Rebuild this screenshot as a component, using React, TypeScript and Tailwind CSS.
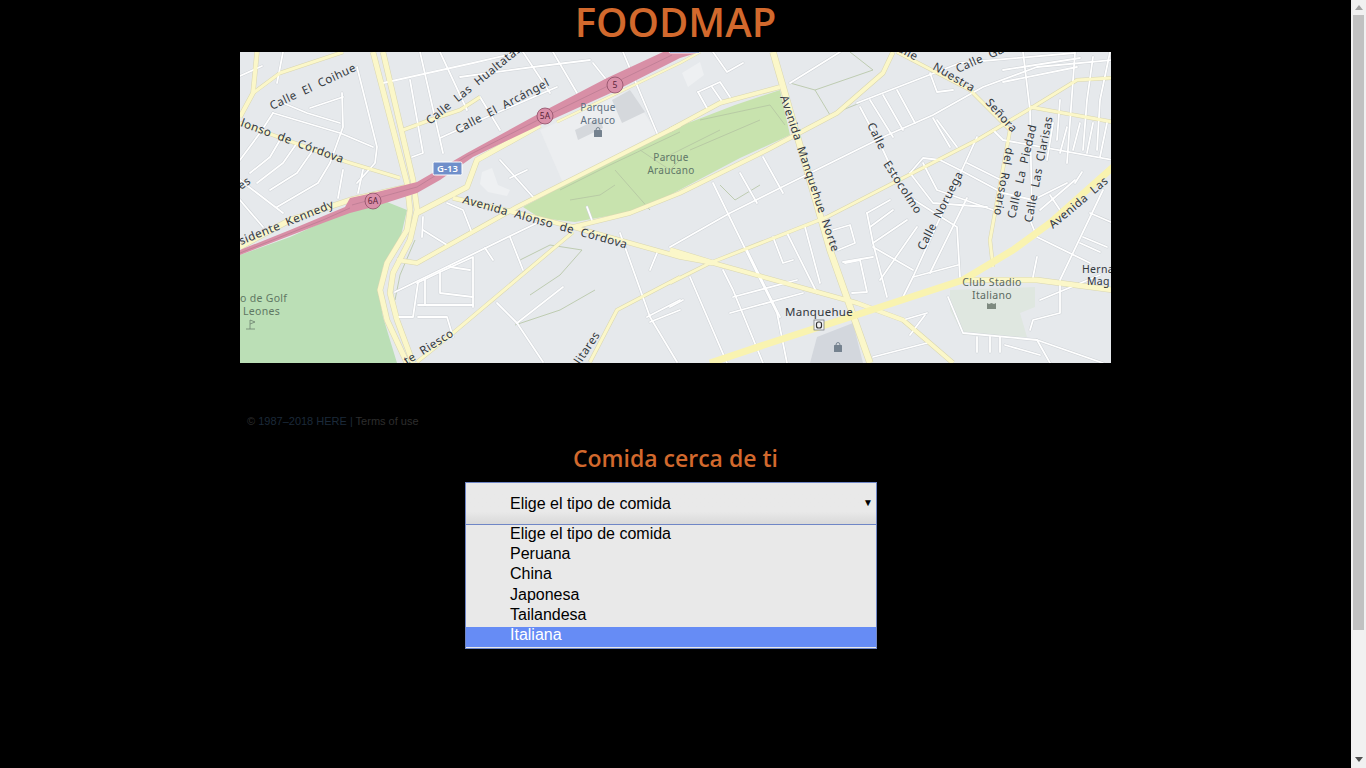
import React from 'react';

// park, mall and other area fills, in page coordinates (viewBox matches the map's place on the page)
const areas: [string, string][] = [
  ['#bbdfb6', '240,255 290,237 350,210 387,202 407,210 400,240 383,267 378,290 383,317 397,363 240,363'],
  ['#c8e3ae', '523,207 670,130 735,105 780,90 790,135 740,158 670,195 630,212 575,222 540,218'],
  ['#dfe7e0', '950,290 1035,287 1035,307 1020,313 1027,337 963,335 950,310'],
  ['#d3d7dd', '817,337 853,323 863,363 810,363'],
  ['#eceef0', '540,130 630,90 657,133 563,183'],
  ['#d5d8dc', '575,130 600,118 603,128 578,140'],
  ['#d5d8dc', '612,100 630,90 645,112 622,123'],
  ['#eef0f2', '482,172 492,168 498,185 510,190 507,196 488,192 480,184'],
  ['#eef0f2', '682,73 700,62 704,75 688,87'],
];

const minor: string[] = [
  '240,76 262,66', '273,113 340,133 373,147', '283,103 307,113 340,123', '310,108 343,97',
  '342,93 343,127 330,163 318,183 277,207', '357,67 377,147 375,163 357,183', '283,52 277,83',
  '273,113 260,133 240,160', '313,150 297,173 270,190', '297,143 283,163 257,183', '280,140 270,157 250,173',
  '240,180 283,213', '240,200 263,227', '343,170 338,198', '363,170 358,193',
  '383,83 473,63 520,52', '410,80 423,153 412,157', '420,52 443,153', '440,52 467,110',
  '440,138 473,123 557,87', '480,97 500,130', '523,52 550,93', '553,52 577,93', '460,77 533,67 590,60',
  '593,63 617,93', '623,52 657,133', '500,160 533,197', '510,178 527,170', '447,203 463,210 472,233',
  '423,230 447,245', '423,217 422,237', '395,292 537,223', '510,237 523,270', '485,248 493,260',
  '397,317 413,317 418,283', '418,305 473,305', '417,283 440,272 473,257 473,307', '425,280 425,305',
  '440,272 440,293 473,297', '450,267 470,270', '418,317 447,317 453,337', '620,233 650,317 677,362',
  '647,317 680,300', '650,322 680,310', '517,323 563,287', '517,323 543,362', '497,303 517,323',
  '650,270 657,253', '587,207 593,223', '630,213 647,207',
  '713,52 727,72 743,63', '698,92 720,82 730,97', '698,92 708,110', '712,87 723,103',
  '790,83 840,52', '857,103 960,63 1075,53', '860,107 883,150 903,193 957,227 960,277',
  '870,100 893,137', '883,95 903,130', '897,90 915,123', '670,247 730,213 790,183 883,137 933,115 983,87 1037,67 1113,60',
  '713,183 757,273 777,313 787,363', '740,173 757,203', '763,157 783,193', '937,120 957,147', '933,118 950,147',
  '940,160 960,170 1003,193 1033,200 1067,183', '967,163 1007,183', '993,130 1003,140 1113,160',
  '910,173 933,203 987,207', '923,163 937,190 993,210', '910,173 923,158 940,160',
  '977,137 913,277 903,297', '967,198 930,273', '913,277 958,265', '867,213 873,243 887,297', '867,213 890,200',
  '870,227 893,210', '873,243 907,220', '880,280 917,227', '873,247 913,270', '843,262 873,257',
  '833,230 850,225 855,243 838,250', '845,263 860,260 867,292 852,293', '773,237 783,263 793,260',
  '787,233 817,293', '805,227 820,283', '690,277 727,363', '723,270 733,290 763,363',
  '733,297 797,280', '730,313 803,293', '747,250 780,317', '873,357 927,343', '910,335 925,315',
  '670,307 683,300', '903,320 927,313',
  '948,297 963,333 1037,340 1103,363', '977,337 977,352', '990,337 990,352', '1000,337 1000,352',
  '1030,330 1033,320 1060,313 1060,283', '1037,257 1033,277', '1030,220 1037,237 1090,263',
  '1060,280 1103,190', '1090,213 1113,223', '1083,237 1107,247', '1080,243 1100,252',
  '1075,53 1067,163', '1023,52 1030,110 1032,217', '1093,57 1087,100 1083,150', '1110,52 1100,100 1097,150',
  '1060,100 1057,140', '1003,70 1080,58', '1003,82 1077,67', '930,73 937,92 953,90', '1040,210 1075,180',
  '1050,195 1060,210', '1075,183 1082,172', '1040,300 1100,275', '1005,345 1040,355', '1037,340 1050,363',
  '1053,123 1047,160', '1067,127 1060,153', '1080,123 1073,150', '1093,123 1087,153', '1107,123 1100,157',
];

const major: [string, number][] = [
  ['373,52 407,183 410,210 407,230 387,263 380,290 387,320 407,363', 5],
  ['383,52 413,180 417,210 410,240 393,273 390,293 397,320 413,363', 5],
  ['257,52 253,93 240,117', 4],
  ['253,93 280,73 343,52', 3],
  ['240,123 347,162 400,178', 3],
  ['453,198 517,213 573,227 680,257 713,263 857,303 903,320 953,363', 4],
  ['417,213 467,187 477,160 540,125', 5],
  ['557,122 680,63 700,52', 2],
  ['680,125 517,207 417,263 397,260', 4],
  ['670,130 720,103 780,87', 4],
  ['573,227 630,213 680,193 767,150 837,113 883,73 893,52', 4],
  ['573,232 453,333 417,362', 3],
  ['680,277 617,310 590,362', 3],
  ['670,283 710,263 827,217 977,140 1033,107 1077,80 1113,78', 3],
  ['773,52 830,250 870,363', 6],
  ['963,280 1037,280 1113,290', 5],
  ['897,52 970,90 1010,130 990,240 993,267', 3],
  ['1030,107 1113,122', 3],
  ['403,130 430,120 460,110 480,97', 3],
  ['670,250 713,263', 5],
  ['240,247 290,220 350,200 407,187', 5],
];

const veg: string[] = [
  '560,190 610,165 680,132', '615,170 650,210', '570,200 600,195 615,185', '640,150 670,170 680,160',
  '700,120 770,105 785,125', '690,150 760,120', '660,160 720,130', '790,83 815,90 873,70 850,52',
  '815,90 830,115 860,103', '720,185 735,200 760,185', '415,240 400,275 395,300', '515,325 560,310 595,290',
  '520,260 550,245 582,250 560,275 530,295', '930,70 900,52',
];

const labels: [string, number, number, number][] = [
  ['Calle  El  Coihue', 272, 110, -25],
  ['Calle  Las  Hualtatas', 430, 125, -39],
  ['Calle  El  Arcángel', 458, 134, -28],
  ['lonso  de  Córdova', 240, 126, 20],
  ['es', 241, 190, -35],
  ['sidente  Kennedy', 241, 245, -22],
  ['Avenida  Alonso  de  Córdova', 462, 203, 15.5],
  ['te  Riesco', 407, 365, -32],
  ['litares', 580, 365, -56],
  ['Avenida  Manquehue  Norte', 780, 97, 71.5],
  ['Calle', 867, 125, 64],
  ['Estocolmo', 883, 164, 57],
  ['Calle  Noruega', 924, 251, -63],
  ['alle', 897, 51, 28],
  ['Nuestra', 932, 69, 30],
  ['Señora', 985, 103, 48],
  ['del  Rosario', 1006, 147, 100],
  ['Calle  La  Piedad', 1015, 219, -77],
  ['Calle  Las  Clarisas', 1032, 223, -79],
  ['Avenida  Las', 1053, 229, -40],
  ['Calle  Ga', 958, 73, -24],
];

const places: [string, number, number, string, number][] = [
  ['Parque', 598, 111, '#5d6f80', 10],
  ['Arauco', 598, 124, '#5d6f80', 10],
  ['Parque', 671, 161, '#5f7768', 10],
  ['Araucano', 671, 174, '#5f7768', 10],
  ['Club Stadio', 992, 286, '#5b6a60', 10.5],
  ['Italiano', 992, 299, '#5b6a60', 10.5],
  ['Manquehue', 819, 316, '#33383d', 11.5],
];

const Shield = ({ x, y, t }: { x: number; y: number; t: string }) => (
  <g>
    <circle cx={x} cy={y} r={8} fill="#d98fa8" stroke="#8d4e66" strokeWidth={0.8} />
    <text x={x} y={y + 3} textAnchor="middle" fontSize={8.5} fill="#5a2438">{t}</text>
  </g>
);

const Bag = ({ x, y }: { x: number; y: number }) => (
  <g>
    <rect x={x - 4} y={y - 3} width={8} height={7} rx={0.5} fill="#75828f" />
    <path d={`M${x - 2} ${y - 3}a2 2.5 0 0 1 4 0`} fill="none" stroke="#75828f" />
  </g>
);

const MapView = () => (
  <svg viewBox="240 52 871 311" className="block h-[311px] w-[871px] bg-[#e6e9ec] font-['Noto_Sans',sans-serif]">
    {areas.map(([fill, points], i) => <polygon key={i} points={points} fill={fill} />)}
    {veg.map((p, i) => <polyline key={i} points={p} fill="none" stroke="#b4c4a2" strokeWidth={0.8} />)}
    {minor.map((p, i) => (
      <polyline key={`c${i}`} points={p} fill="none" stroke="#cfd3d7" strokeWidth={2.8} strokeLinejoin="round" strokeLinecap="round" />
    ))}
    {major.map(([p, w], i) => (
      <polyline key={`m${i}`} points={p} fill="none" stroke="#d9d6b0" strokeWidth={w + 1} strokeLinejoin="round" />
    ))}
    {minor.map((p, i) => (
      <polyline key={i} points={p} fill="none" stroke="#ffffff" strokeWidth={1.8} strokeLinejoin="round" strokeLinecap="round" />
    ))}
    {major.map(([p, w], i) => (
      <polyline key={i} points={p} fill="none" stroke="#fbf7c9" strokeWidth={w} strokeLinejoin="round" />
    ))}
    <polyline points="710,363 770,343 850,317 963,280 1013,250 1050,223 1113,167" fill="none" stroke="#f9f3b0" strokeWidth={7} strokeLinejoin="round" />
    <polygon points="240,250 290,230 345,207 350,198 373,193 417,182 467,153 540,113 607,78 663,52 700,52 680,58 613,92 540,125 473,157 440,180 417,193 373,207 350,213 323,223 240,255" fill="#d88fa6" />
    <polyline points="352,205 417,187 467,156 540,119 610,85 672,55" fill="none" stroke="#b87a90" strokeWidth={0.7} />
    <polyline points="240,253 323,220 350,208" fill="none" stroke="#b87a90" strokeWidth={0.7} />

    <rect x={669} y={46} width={31} height={7} rx={1.5} fill="#6f8fca" stroke="#fff" strokeWidth={0.8} />
    <rect x={433} y={162} width={29} height={13} rx={1.5} fill="#6f8fca" stroke="#ffffff" strokeWidth={1} />
    <text x={447.5} y={172} textAnchor="middle" fontSize={9.5} fontWeight={600} fill="#ffffff">G-13</text>
    <Shield x={373} y={201} t="6A" />
    <Shield x={545} y={116} t="5A" />
    <Shield x={615} y={85} t="5" />

    {labels.map(([t, x, y, a], i) => (
      <text key={i} x={x} y={y} transform={`rotate(${a} ${x} ${y})`} fontSize={11.5} letterSpacing={0.5} fill="#33383d" stroke="#e6e9ec" strokeWidth={0.4} paintOrder="stroke" xmlSpace="preserve">{t}</text>
    ))}
    {places.map(([t, x, y, c, s], i) => (
      <text key={i} x={x} y={y} textAnchor="middle" fontSize={s} letterSpacing={0.3} fill={c}>{t}</text>
    ))}
    <text x={240} y={302} fontSize={10.5} letterSpacing={0.3} fill="#5f7763">o de Golf</text>
    <text x={243} y={315} fontSize={10.5} letterSpacing={0.3} fill="#5f7763">Leones</text>
    <path d="M250 329v-9l5 2-5 2M246 329h9" fill="none" stroke="#6c806f" strokeWidth={0.8} />
    <text x={1082} y={273} fontSize={10.5} letterSpacing={0.3} fill="#33383d">Herna</text>
    <text x={1087} y={285} fontSize={10.5} letterSpacing={0.3} fill="#33383d">Mag</text>

    <Bag x={598} y={133} />
    <Bag x={838} y={348} />
    <rect x={814} y={320} width={10} height={10} fill="#f2f3f4" stroke="#6e7275" strokeWidth={0.7} />
    <rect x={816.5} y={322} width={5} height={6} rx={2} fill="none" stroke="#333" strokeWidth={1.2} />
    <rect x={987} y={305} width={9} height={4} fill="#7e8a80" />
    <path d="M987 305v-2l2 1 2.5-1 2.5 1 2-1v2z" fill="#7e8a80" />
  </svg>
);

const Scrollbar = () => (
  <div className="flex w-[15px] shrink-0 flex-col items-center bg-[#f1f1f1]">
    <div className="mt-[5px] h-0 w-0 border-x-[4px] border-b-[5px] border-x-transparent border-b-[#a3a3a3]" />
    <div className="mt-[5px] h-[615px] w-[11px] bg-[#c1c1c1]" />
    <div className="mt-auto mb-[6px] h-0 w-0 border-x-[4px] border-t-[5px] border-x-transparent border-t-[#505050]" />
  </div>
);

const options = ['Elige el tipo de comida', 'Peruana', 'China', 'Japonesa', 'Tailandesa'];

const App = () => {
  return (
    <div className="flex h-screen overflow-hidden bg-black">
      <main className="flex min-w-0 flex-1 flex-col items-center">
        <h1 className="h-[52px] text-[40px] leading-[44px] font-semibold text-[#d2692d] font-['Open_Sans',sans-serif]">FOODMAP</h1>
        <MapView />
        <p className="mt-[51px] h-[14px] w-[871px] pl-[7px] text-[11px] leading-[14px] text-[#2e2e2e] font-['Liberation_Sans',sans-serif]">
          © <span className="text-[#1c2a3a]">1987–2018 HERE |</span> Terms of use
        </p>
        <h2 className="mt-[13px] h-[34px] text-[23px] leading-[34px] font-semibold text-[#d2692d] font-['Open_Sans',sans-serif]">Comida cerca de ti</h2>
        <div className="mt-[7px] mr-[9px] w-[412px] font-['Liberation_Sans',sans-serif] text-[16px] text-black">
          <div className="relative flex h-[43px] items-center border border-[#6f86c6] bg-gradient-to-b from-[#e9e9e9] from-70% to-[#d9d9d9] pl-[44px]">
            Elige el tipo de comida
            <span className="absolute top-[10px] right-[3px] text-[10px] leading-[20px]">▼</span>
          </div>
          <ul className="h-[124px] border-x border-b border-[#6f86c6] bg-[#e9e9e9] leading-[18px]">
            {options.map((o) => (
              <li key={o} className="h-[20.2px] pl-[44px]">{o}</li>
            ))}
            <li className="mt-[1px] h-[20px] bg-[#668cf5] pl-[44px] leading-[16px] text-white">Italiana</li>
          </ul>
        </div>
      </main>
      <Scrollbar />
    </div>
  );
};

export default App;
